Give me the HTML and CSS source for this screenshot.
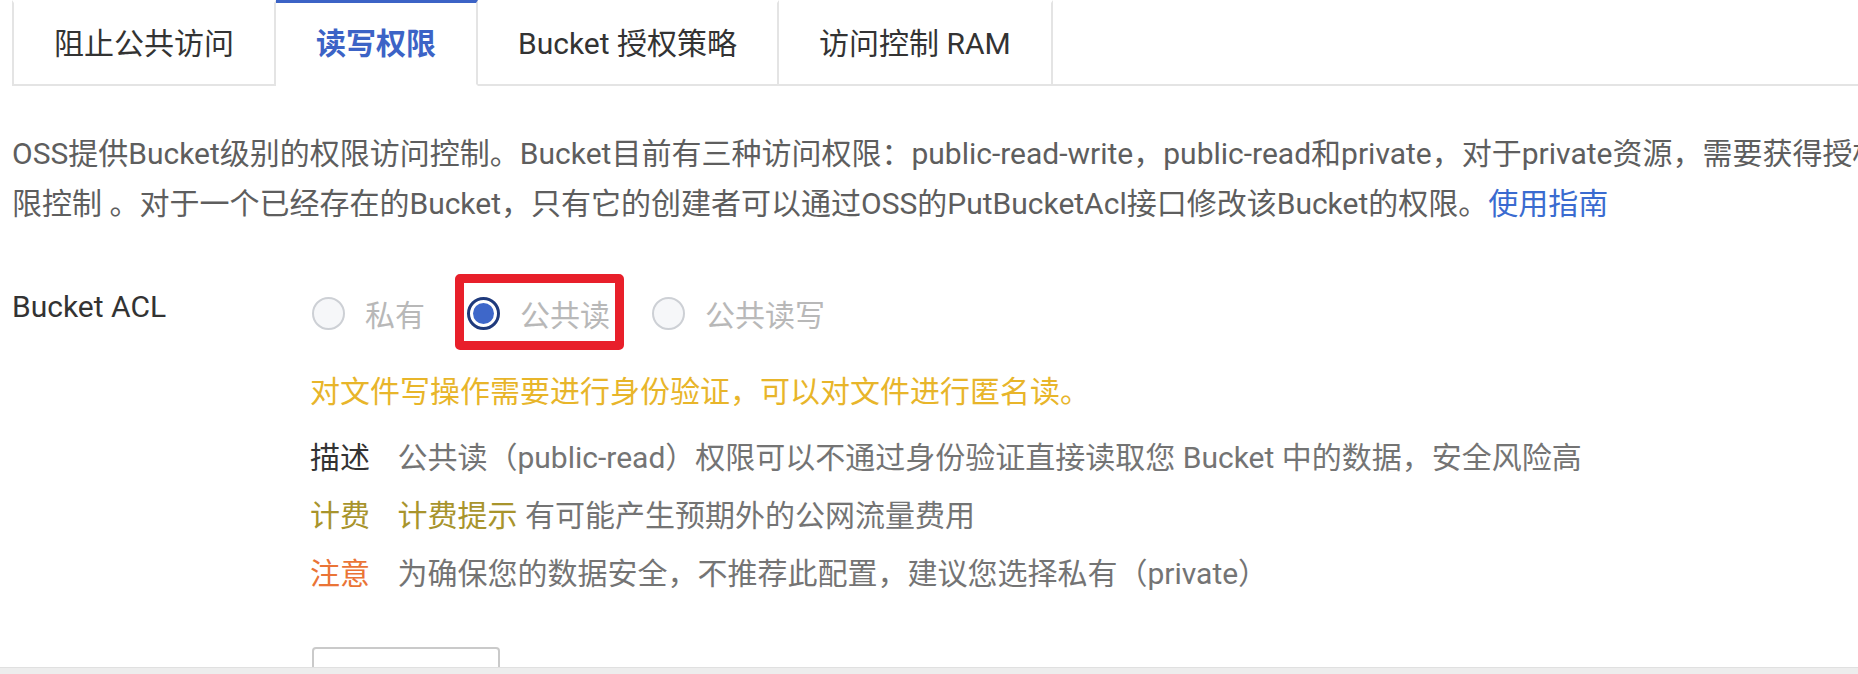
FILE: index.html
```html
<!DOCTYPE html>
<html lang="zh-CN">
<head>
  <meta charset="UTF-8">
  <title>读写权限</title>
  <link rel="stylesheet" href="styles.css">
</head>
<body>
  <div class="page">
    <div class="tabs">
      <div class="tab">阻止公共访问</div>
      <div class="tab active">读写权限</div>
      <div class="tab">Bucket 授权策略</div>
      <div class="tab">访问控制 RAM</div>
    </div>

    <p class="intro">
      <span class="line">OSS提供Bucket级别的权限访问控制。Bucket目前有三种访问权限：public-read-write，public-read和private，对于private资源，需要获得授权才能访问，这是一种权</span>
      <span class="line">限控制 。对于一个已经存在的Bucket，只有它的创建者可以通过OSS的PutBucketAcl接口修改该Bucket的权限。<a href="#">使用指南</a></span>
    </p>

    <div class="form-row">
      <div class="form-label">Bucket ACL</div>
      <div class="form-body">
        <div class="radio-group">
          <label class="option"><span class="radio"></span>私有</label>
          <label class="option marked"><span class="radio checked"></span>公共读</label>
          <label class="option"><span class="radio"></span>公共读写</label>
        </div>

        <p class="hint">对文件写操作需要进行身份验证，可以对文件进行匿名读。</p>

        <div class="meta">
          <div class="meta-row">
            <span class="meta-key">描述</span>
            <span class="meta-val">公共读（public-read）权限可以不通过身份验证直接读取您 Bucket 中的数据，安全风险高</span>
          </div>
          <div class="meta-row">
            <span class="meta-key cost">计费</span>
            <span class="meta-val"><span class="cost">计费提示</span> 有可能产生预期外的公网流量费用</span>
          </div>
          <div class="meta-row">
            <span class="meta-key warn">注意</span>
            <span class="meta-val">为确保您的数据安全，不推荐此配置，建议您选择私有（private）</span>
          </div>
        </div>

        <div class="btn-stub"></div>
      </div>
    </div>
  </div>
  <div class="bottom-bar"></div>
</body>
</html>
```

FILE: styles.css
```css
html, body {
  margin: 0;
  overflow: hidden;
}
body {
  font-family: Roboto, "Noto Sans CJK SC", sans-serif;
  font-size: 30px;
  color: #333;
  background-color: #fff;
}
.page {
  height: 667px;
  overflow: hidden;
  padding-left: 12px;
}

/* tabs */
.tabs {
  display: flex;
  border-bottom: 2px solid #e4e4e4;
}
.tab {
  height: 81px;
  line-height: 81px;
  padding: 0 40px;
  border-top: 3px solid transparent;
  border-right: 2px solid #e4e4e4;
  margin-bottom: -2px;
  border-bottom: 2px solid #e4e4e4;
  white-space: nowrap;
  color: #333;
}
.tab:first-child {
  border-left: 2px solid #e4e4e4;
}
.tab.active {
  border-top-color: #3c63c6;
  border-bottom-color: #fff;
  color: #3c63c6;
  font-weight: bold;
}

/* intro text */
.intro {
  margin: 43px 0 0;
  line-height: 50px;
  color: #5e5e5e;
}
.intro .line {
  display: block;
  white-space: nowrap;
}
.intro a {
  color: #3a6bd0;
  text-decoration: none;
}

/* form */
.form-row {
  display: flex;
  margin-top: 58px;
}
.form-label {
  width: 298px;
  flex-shrink: 0;
  line-height: 40px;
  color: #333;
}
.form-body {
  flex: 1;
}
.radio-group {
  display: flex;
  gap: 40px;
  height: 40px;
  margin-top: 6px;
}
.option {
  display: inline-flex;
  align-items: center;
  gap: 20px;
  color: #b8b8b8;
  white-space: nowrap;
}
.option.marked {
  border: 9px solid #e81f2a;
  border-radius: 5px;
  padding: 10px 5px 8px 1px;
  margin: -19px -14px -17px -10px;
}
.radio {
  width: 33px;
  height: 33px;
  box-sizing: border-box;
  border: 2px solid #cdd0d5;
  border-radius: 50%;
  background-color: #f6f7f9;
  margin-left: 2px;
  display: flex;
  align-items: center;
  justify-content: center;
}
.radio.checked {
  border: 3px solid #1f3a7c;
  background-color: #fff;
}
.radio.checked::after {
  content: "";
  width: 21px;
  height: 21px;
  border-radius: 50%;
  background-color: #3e67c9;
}

.hint {
  margin: 39px 0 0;
  line-height: 40px;
  color: #e8b52a;
  white-space: nowrap;
}

.meta {
  margin-top: 17px;
}
.meta-row {
  line-height: 58px;
  white-space: nowrap;
}
.meta-key {
  color: #333;
  margin-right: 20px;
}
.meta-val {
  color: #747474;
}
.cost {
  color: #a8942c;
}
.warn {
  color: #ea7436;
}

.btn-stub {
  margin-top: 44px;
  margin-left: 2px;
  width: 188px;
  height: 50px;
  box-sizing: border-box;
  border: 2px solid #cacaca;
  border-radius: 4px 4px 0 0;
  background-color: #fff;
}

.bottom-bar {
  height: 6px;
  border-top: 1px solid #e0e0e0;
  background-color: #ededed;
}
```
